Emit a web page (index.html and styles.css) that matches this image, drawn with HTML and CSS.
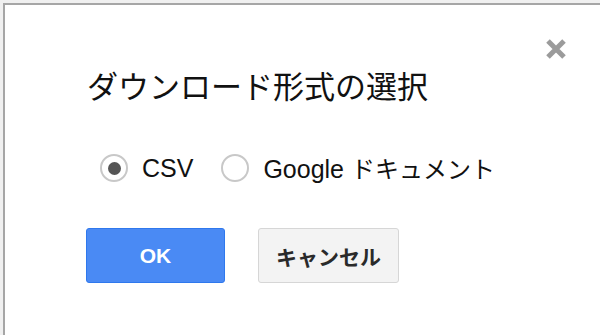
FILE: index.html
```html
<!DOCTYPE html>
<html lang="ja">
<head>
<meta charset="utf-8">
<title>ダウンロード形式の選択</title>
<link rel="stylesheet" href="styles.css">
</head>
<body>
<div class="dialog">
  <button class="close" aria-label="閉じる">
    <svg width="22" height="22" viewBox="0 0 22 22"><path d="M3 3 L19 19 M19 3 L3 19" stroke="#9b9b9b" stroke-width="5" fill="none"/></svg>
  </button>
  <h1 class="title">ダウンロード形式の選択</h1>
  <div class="options">
    <label class="option"><span class="radio checked"></span><span class="label">CSV</span></label>
    <label class="option"><span class="radio"></span><span class="label">Google <span class="ja">ドキュメント</span></span></label>
  </div>
  <div class="buttons">
    <button class="btn primary">OK</button>
    <button class="btn secondary">キャンセル</button>
  </div>
</div>
</body>
</html>
```

FILE: styles.css
```css
html, body {
  margin: 0;
  padding: 0;
  background: #f0f0f0;
  height: 100%;
  overflow: hidden;
}
body {
  font-family: "Liberation Sans", "Noto Sans CJK JP", sans-serif;
  color: #222;
}
.dialog {
  position: relative;
  margin: 3px 0 0 3px;
  border-top: 2px solid #a6a6a6;
  border-left: 2px solid #a6a6a6;
  background: #fff;
  height: 332px;
  padding: 60px 0 0 81px;
  box-sizing: border-box;
}
.close {
  position: absolute;
  top: 33px;
  right: 33px;
  width: 22px;
  height: 22px;
  padding: 0;
  border: 0;
  background: none;
  display: block;
}
.close svg { display: block; }
.title {
  margin: 0;
  font-family: "Noto Sans CJK JP", sans-serif;
  font-weight: 400;
  font-size: 31px;
  line-height: 40px;
  color: #111;
  padding-left: 1px;
}
.options {
  display: flex;
  align-items: center;
  margin-top: 48px;
  height: 30px;
  padding-left: 14px;
}
.option {
  display: flex;
  align-items: center;
  margin-right: 28px;
}
.radio {
  width: 24px;
  height: 24px;
  border: 2px solid #c8c8c8;
  border-radius: 50%;
  box-sizing: content-box;
  display: flex;
  align-items: center;
  justify-content: center;
  margin-right: 14px;
}
.radio.checked::after {
  content: "";
  width: 13px;
  height: 13px;
  border-radius: 50%;
  background: #555;
}
.label {
  font-size: 25px;
  line-height: 30px;
  color: #111;
}
.label .ja {
  font-family: "Noto Sans CJK JP", sans-serif;
  font-size: 24px;
}
.buttons {
  display: flex;
  gap: 33px;
  margin-top: 45px;
}
.btn {
  height: 55px;
  border-radius: 3px;
  box-sizing: border-box;
  font-weight: 700;
  padding: 0;
}
.primary {
  width: 139px;
  background: #4a8af4;
  border: 1px solid #2f78ed;
  color: #fff;
  font-family: "Liberation Sans", sans-serif;
  font-size: 21px;
}
.secondary {
  width: 141px;
  background: #f3f3f3;
  border: 1px solid #d6d6d6;
  color: #2a2a2a;
  font-family: "Noto Sans CJK JP", sans-serif;
  font-size: 21px;
}
```
